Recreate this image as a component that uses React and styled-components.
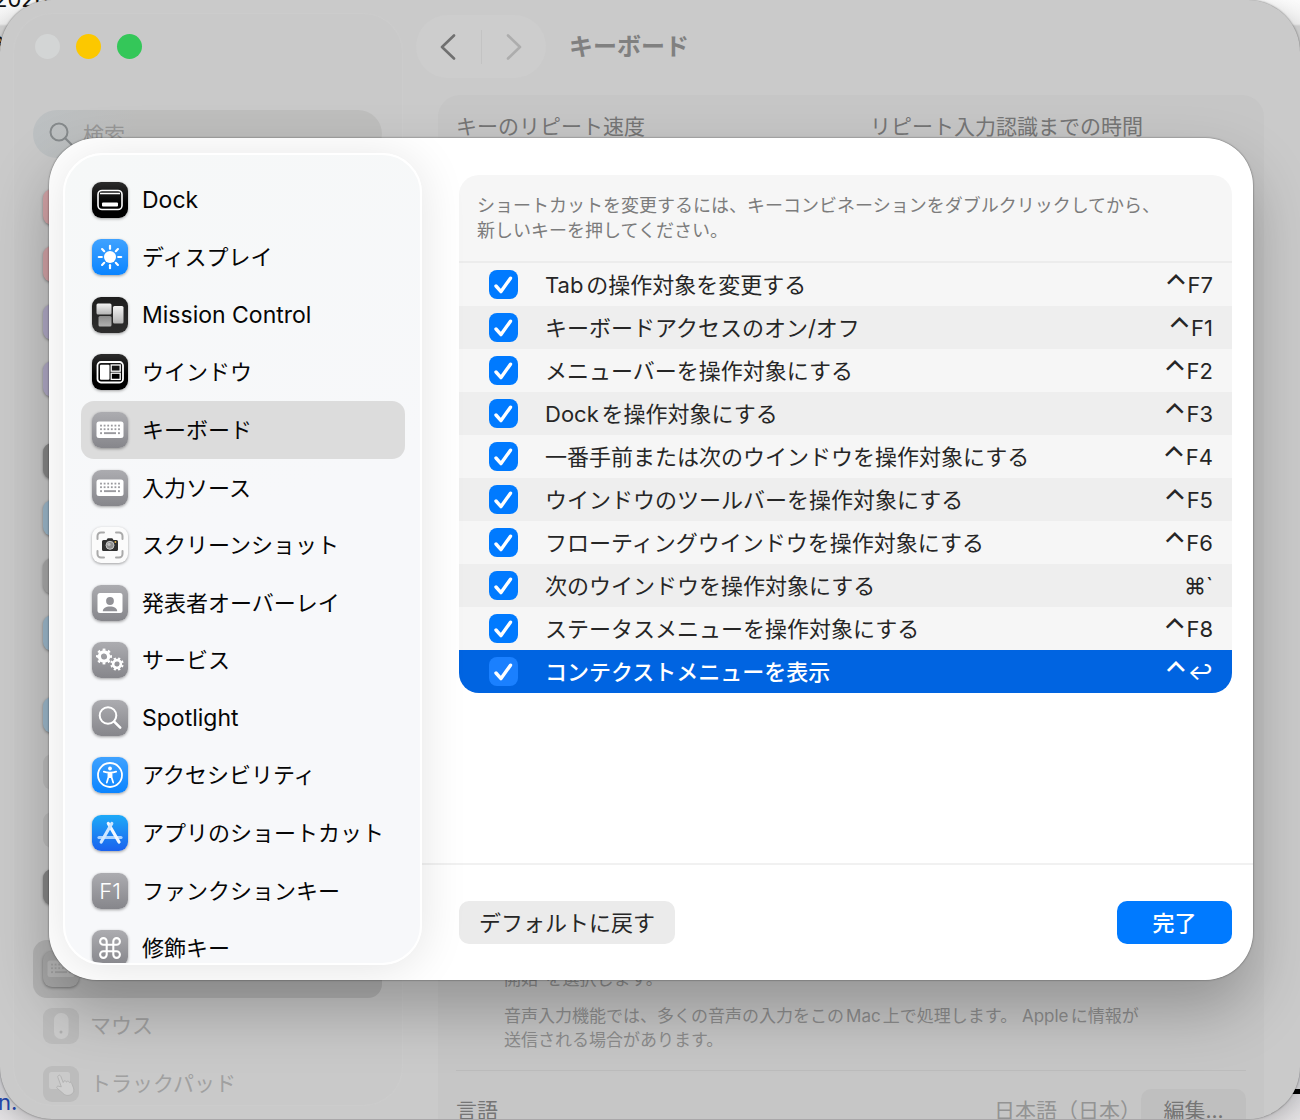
import React from "react";
import styled, { createGlobalStyle, css } from "styled-components";

const GlobalStyle = createGlobalStyle`
  *, *::before, *::after { box-sizing: border-box; }
  body {
    margin: 0;
    overflow: hidden;
    font-family: Inter, "Noto Sans CJK JP", sans-serif;
    text-autospace: normal;
    -webkit-font-smoothing: antialiased;
  }
  button, input { font: inherit; text-autospace: inherit; }
  ul { list-style: none; margin: 0; padding: 0; }
`;

/* ---------- desktop behind the window ---------- */

const Desktop = styled.div`
  position: relative;
  height: 100vh;
  overflow: hidden;
  background: linear-gradient(180deg, #fbfbfb 0, #f0f0f0 24px, #d4d4d4 26px, #d8d8dc 1080px, #e4e2e4 100%);
`;

const DesktopText = styled.span`
  position: absolute;
  left: ${(p) => p.$x}px;
  top: ${(p) => p.$y}px;
  font-size: 22px;
  line-height: 24px;
  color: ${(p) => p.$color};
`;

const DesktopRule = styled.div`
  position: absolute;
  right: 0;
  bottom: 26px;
  width: 40px;
  height: 5px;
  background: #000;
`;

/* ---------- settings window ---------- */

const Window = styled.div`
  position: absolute;
  inset: 0 0 1px 0;
  display: grid;
  grid-template-columns: 402px 1fr;
  border-radius: 52px;
  overflow: hidden;
  background: #cacaca;
  box-shadow: 0 0 2px rgba(0, 0, 0, 0.5), 0 8px 24px rgba(0, 0, 0, 0.2);
`;

const BackSidebar = styled.aside`
  display: flex;
  flex-direction: column;
  margin: 14px 0 14px 14px;
  border-radius: 38px;
  overflow: hidden;
  background: #c9c9c9;
  box-shadow: 0 0 2px #d0d0d0;
`;

const Lights = styled.div`
  display: flex;
  gap: 16px;
  padding: 20px 20px 0 21px;
`;

const Light = styled.button`
  width: 25px;
  height: 25px;
  padding: 0;
  border: 0;
  border-radius: 50%;
  background: ${(p) => p.$color};
`;

const Search = styled.label`
  display: flex;
  align-items: center;
  gap: 10px;
  flex: none;
  height: 48px;
  margin: 51px 20px 0 19px;
  padding: 0 16px;
  border-radius: 24px;
  background: linear-gradient(90deg, #bcc0c2, #bebebd 30%);
  svg { flex: none; }
`;

const SearchInput = styled.input`
  width: 100%;
  min-width: 0;
  padding: 0;
  border: 0;
  outline: 0;
  background: transparent;
  font-size: 21px;
  &::placeholder { color: #969696; opacity: 1; }
`;

const BackGroups = styled.div`
  display: flex;
  flex-direction: column;
  gap: 24px;
  margin: 20px 20px 0 19px;
`;

const BackGroup = styled.ul`
  flex: none;
  display: grid;
  grid-template-rows: repeat(4, 1fr);
  height: 230px;
`;

const BackRow = styled.li`
  display: flex;
  align-items: center;
  gap: 11px;
  padding: 0 10px;
  border-radius: 14px;
  font-size: 21px;
  line-height: 30px;
  color: #a0a0a0;
  background: ${(p) => (p.$active ? "#b4b4b4" : "transparent")};
`;

const Main = styled.main`
  display: flex;
  flex-direction: column;
  min-width: 0;
  height: 100%;
`;

const Toolbar = styled.header`
  display: flex;
  align-items: center;
  gap: 23px;
  padding: 15px 14px 17px;
`;

const NavPill = styled.nav`
  display: grid;
  grid-template-columns: 1fr 1px 1fr;
  align-items: center;
  width: 130px;
  height: 63px;
  border-radius: 32px;
  background: #cdcdcd;
`;

const NavButton = styled.button`
  display: grid;
  place-items: center;
  height: 100%;
  padding: 0;
  border: 0;
  background: none;
  color: ${(p) => (p.disabled ? "#adadad" : "#707070")};
`;

const NavDivider = styled.span`
  height: 34px;
  background: #c3c3c3;
`;

const WindowTitle = styled.h1`
  margin: 0;
  font-size: 24px;
  font-weight: 600;
  line-height: 32px;
  color: #808080;
`;

const BackCard = styled.section`
  flex: 1;
  min-height: 0;
  display: flex;
  flex-direction: column;
  justify-content: space-between;
  margin: 0 36px;
  border-radius: 22px 22px 0 0;
  background: #c6c6c6;
  overflow: hidden;
`;

const RateRow = styled.div`
  display: grid;
  grid-template-columns: 1fr 1fr;
  column-gap: 38px;
  padding: 17px 18px;
  font-size: 21px;
  line-height: 30px;
  color: #757575;
`;

const Dictation = styled.div`
  padding: 0 66px 18px;
  font-size: 17px;
  line-height: 24px;
  color: #8c8c8c;
  p { margin: 0; }
  p + p { margin-top: 13px; }
`;

const LanguageRow = styled.div`
  display: flex;
  align-items: flex-start;
  height: 49px;
  margin: 0 18px;
  padding-top: 18px;
  border-top: 1px solid #bcbcbc;
  font-size: 21px;
  line-height: 43px;
  color: #757575;
`;

const LanguageValue = styled.span`
  margin-left: auto;
  color: #939393;
`;

const EditButton = styled.button`
  height: 43px;
  min-width: 105px;
  padding: 0 20px;
  border: 0;
  border-radius: 10px;
  background: #bfbfbf;
  color: #757575;
`;

/* ---------- shortcuts sheet ---------- */

const Overlay = styled.div`
  position: absolute;
  inset: 0;
  display: grid;
  padding: 138px 47px 140px 49px;
`;

const Dialog = styled.div`
  display: grid;
  grid-template-columns: 373px 1fr;
  min-height: 0;
  border-radius: 48px;
  overflow: hidden;
  background: #fff;
`;

const DialogShadow = styled.div`
  display: grid;
  min-height: 0;
  border-radius: 48px;
  box-shadow: 0 0 2px rgba(0, 0, 0, 0.6), 0 30px 60px rgba(0, 0, 0, 0.25);
`;

const Sidebar = styled.nav`
  position: relative;
  z-index: 1;
  min-height: 0;
  margin: 15px 0 15px 14px;
  padding: 16px 15px 0 16px;
  border: 2px solid #fff;
  border-radius: 40px;
  overflow: hidden;
  background: linear-gradient(160deg, #f6f8f8, #f7f8fa 45%, #f7f8fa);
  box-shadow: 0 4px 48px rgba(0, 0, 0, 0.11);
`;

const SidebarList = styled.ul`
  display: grid;
  grid-template-rows: repeat(14, 1fr);
  height: 806px;
`;

const SidebarItem = styled.button`
  display: flex;
  align-items: center;
  gap: 14px;
  width: 100%;
  height: 100%;
  padding: 0 11px;
  border: 0;
  border-radius: 13px;
  background: ${(p) => (p.$active ? "#dcdcdc" : "transparent")};
  color: #060606;
  font-size: ${(p) => (p.$latin ? 23 : 22)}px;
  line-height: 30px;
  text-align: left;
  white-space: nowrap;
`;

const tones = {
  black: "linear-gradient(#2c2c2c, #000 60%)",
  graphite: "linear-gradient(#1e1e1e, #2e2e2e)",
  blue: "linear-gradient(#3fa2ff, #0a84ff)",
  store: "linear-gradient(#1eaaf8, #1a62ee)",
  gray: "linear-gradient(#acacb0, #86868b)",
  white: "#fbfbfb",
  pink: "#d3a3a6",
  lavender: "#b0a9c6",
  sky: "#9db9cc",
  ash: "#a9a9a9",
  dark: "#868686",
  faint: "#bcbcbc",
};

const Tile = styled.span`
  flex: none;
  display: grid;
  place-items: center;
  width: 36px;
  height: 36px;
  border-radius: 9px;
  overflow: hidden;
  background: ${(p) => tones[p.$tone]};
  ${(p) =>
    !p.$flat &&
    css`
      box-shadow: 0 1px 3px rgba(0, 0, 0, 0.36);
    `}
  color: #fff;
  font-size: 22px;
  font-weight: 300;
  line-height: 36px;
`;

const Pane = styled.div`
  display: flex;
  flex-direction: column;
  min-width: 0;
  min-height: 0;
`;

const PaneBody = styled.div`
  flex: 1;
  min-height: 0;
  padding: 37px 21px 0 37px;
`;

const Card = styled.section`
  border-radius: 20px;
  overflow: hidden;
  background: #f6f6f6;
`;

const Hint = styled.p`
  margin: 0;
  padding: 18px;
  border-bottom: 2px solid #ececec;
  font-size: 18px;
  line-height: 25px;
  color: #7c7c7c;
`;

const Table = styled.table`
  width: 100%;
  border-collapse: collapse;
  font-size: 22px;
  line-height: 30px;
`;

const Row = styled.tr`
  height: 43px;
  color: ${(p) => (p.$selected ? "#fff" : "#262626")};
  background: ${(p) => (p.$selected ? "#0064e1" : "transparent")};
  font-weight: ${(p) => (p.$selected ? 500 : 400)};
  &:nth-child(even) {
    background: ${(p) => (p.$selected ? "#0064e1" : "#eeeeee")};
  }
`;

const CheckCell = styled.td`
  width: 86px;
  padding: 0 0 0 30px;
`;

const NameCell = styled.td`
  padding: 0;
`;

const KeyCell = styled.td`
  padding: 0 19px 0 0;
  text-align: right;
  white-space: nowrap;
`;

const ControlKey = styled.span`
  font-size: 30px;
  line-height: 22px;
  vertical-align: -3px;
`;

const CheckWrap = styled.span`
  display: grid;
  width: 29px;
  height: 29px;
  > * { grid-area: 1 / 1; }
  svg { pointer-events: none; }
`;

const Check = styled.input`
  appearance: none;
  width: 29px;
  height: 29px;
  margin: 0;
  border-radius: 8px;
  background: ${(p) => (p.$selected ? "#1a80ff" : "#007aff")};
`;

const Footer = styled.footer`
  display: flex;
  justify-content: space-between;
  padding: 36px 21px 36px 37px;
  border-top: 2px solid #f1f1f1;
`;

const PushButton = styled.button`
  height: 43px;
  min-width: 115px;
  padding: 0 20px;
  border: 0;
  border-radius: 10px;
  font-size: 22px;
  line-height: 30px;
  font-weight: ${(p) => (p.$primary ? 500 : 400)};
  background: ${(p) => (p.$primary ? "#007aff" : "#ebebeb")};
  color: ${(p) => (p.$primary ? "#fff" : "#262626")};
`;

/* ---------- drawings ---------- */

const Svg = ({ children, size = 36 }) => (
  <svg width={size} height={size} viewBox={`0 0 ${size} ${size}`} fill="none" aria-hidden="true">
    {children}
  </svg>
);

const DockArt = () => (
  <Svg>
    <rect x="6" y="8.5" width="24" height="19" rx="4" stroke="#fff" strokeWidth="1.6" />
    <path d="M8 11.5h20" stroke="#fff" strokeWidth="1.4" />
    <rect x="10" y="20.5" width="16" height="4" rx="1" fill="#fff" />
  </Svg>
);

const DisplayArt = () => (
  <Svg>
    <circle cx="18" cy="18" r="6" fill="#fff" />
    {[0, 45, 90, 135, 180, 225, 270, 315].map((a) => (
      <path key={a} d="M18 6.8v3" stroke="#fff" strokeWidth="2.2" strokeLinecap="round" transform={`rotate(${a} 18 18)`} />
    ))}
  </Svg>
);

const MissionArt = () => (
  <Svg>
    <defs>
      <linearGradient id="pane" x2="0" y2="1">
        <stop stopColor="#f4f4f4" />
        <stop offset="1" stopColor="#b4b4b4" />
      </linearGradient>
      <linearGradient id="paneDim" x2="0" y2="1">
        <stop stopColor="#8b8b8b" />
        <stop offset="1" stopColor="#b2b2b2" />
      </linearGradient>
    </defs>
    <rect x="4.5" y="6.5" width="15" height="11" rx="1.5" fill="url(#pane)" />
    <rect x="21" y="9" width="10.5" height="17.5" rx="1.5" fill="url(#pane)" />
    <rect x="6.5" y="19" width="13" height="10.5" rx="1.5" fill="url(#paneDim)" />
  </Svg>
);

const WindowsArt = () => (
  <Svg>
    <rect x="5.5" y="8" width="25.5" height="20.5" rx="3.5" stroke="#fff" strokeWidth="1.8" />
    <rect x="8" y="10.7" width="9.5" height="15" rx="1" fill="#fff" />
    <rect x="19.2" y="11" width="9" height="6.2" fill="#151515" stroke="#fff" strokeWidth="1.3" />
    <rect x="19.2" y="19.2" width="9" height="6.2" fill="#000" stroke="#fff" strokeWidth="1.3" />
  </Svg>
);

const KeyboardArt = ({ ink = "#9a9a9e", paper = "#fff" }) => (
  <Svg>
    <rect x="4.5" y="9.5" width="27" height="16.5" rx="2.5" fill={paper} />
    {[13.6, 17.2].map((y) =>
      [9, 12.6, 16.2, 19.8, 23.4, 27].map((x) => (
        <rect key={`${x}-${y}`} x={x - 0.9} y={y - 0.9} width="1.8" height="1.8" fill={ink} />
      ))
    )}
    <rect x="8.1" y="20.2" width="1.9" height="1.9" fill={ink} />
    <rect x="12" y="20.2" width="12" height="1.9" fill={ink} />
    <rect x="26" y="20.2" width="1.9" height="1.9" fill={ink} />
  </Svg>
);

const ScreenshotArt = () => (
  <Svg>
    <path
      d="M5.5 12V9a3.5 3.5 0 0 1 3.5-3.5h3M24 5.5h3A3.5 3.5 0 0 1 30.5 9v3M30.5 24v3a3.5 3.5 0 0 1-3.5 3.5h-3M12 30.5H9A3.5 3.5 0 0 1 5.5 27v-3"
      stroke="#a9a9a9"
      strokeWidth="2"
      strokeLinecap="round"
    />
    <path d="M11.5 13h3l1.2-1.8h4.6l1.2 1.8h3a1.5 1.5 0 0 1 1.5 1.5v8a1.5 1.5 0 0 1-1.5 1.5h-13a1.5 1.5 0 0 1-1.5-1.5v-8a1.5 1.5 0 0 1 1.5-1.5z" fill="#2f2f2f" />
    <circle cx="18" cy="18.3" r="4" fill="#8f8f8f" stroke="#d0d0d0" strokeWidth="0.9" />
    <circle cx="17" cy="17.3" r="1.6" fill="#bdbdbd" />
    <circle cx="23.4" cy="15" r="0.9" fill="#e8b64a" />
  </Svg>
);

const PresenterArt = () => (
  <Svg>
    <rect x="5.5" y="8" width="25" height="20" rx="2.5" fill="#fff" />
    <circle cx="18" cy="16" r="3.9" fill="#919196" />
    <path d="M10.8 26.200c0-3 3-4.700 7.200-4.700s7.200 1.700 7.200 4.700z" fill="#919196" />
  </Svg>
);

const Gear = ({ cx, cy, r, turn }) => (
  <g transform={`rotate(${turn} ${cx} ${cy})`}>
    <circle cx={cx} cy={cy} r={r * 0.58} stroke="#fff" strokeWidth={r * 0.4} />
    <circle cx={cx} cy={cy} r={r * 0.86} stroke="#fff" strokeWidth={r * 0.28} pathLength="16" strokeDasharray="1 1" />
  </g>
);

const ServicesArt = () => (
  <Svg>
    <Gear cx={12} cy={14.5} r={8} turn={-11} />
    <Gear cx={25} cy={22} r={6.7} turn={11} />
  </Svg>
);

const SpotlightArt = () => (
  <Svg>
    <circle cx="16" cy="15.5" r="8.3" stroke="#fff" strokeWidth="2" />
    <path d="M22.200 21.700l6 6" stroke="#fff" strokeWidth="2.600" strokeLinecap="round" />
  </Svg>
);

const AccessibilityArt = () => (
  <Svg>
    <circle cx="18" cy="18" r="12" stroke="#fff" strokeWidth="1.8" />
    <circle cx="18" cy="11.5" r="1.9" fill="#fff" />
    <path
      d="M11.800 14.600c2.200.8 4 1 6.200 1s4-.2 6.200-1M16.400 15.500v4.800l-1.600 5.300M19.600 15.500v4.800l1.600 5.300"
      stroke="#fff"
      strokeWidth="1.7"
      strokeLinecap="round"
    />
    <path d="M16 15h4v6h-4z" fill="#fff" />
  </Svg>
);

const StoreArt = () => (
  <Svg>
    <g strokeLinecap="round" strokeWidth="3.2">
      <path d="M7 22.500h22" stroke="#a9d2ff" />
      <path d="M16.300 8.500L27 27" stroke="#f2f8ff" />
      <path d="M19.800 8.500L9.200 27" stroke="#cfe7ff" />
    </g>
  </Svg>
);

const CommandArt = () => (
  <Svg>
    <path
      transform="translate(4.8 4.8) scale(1.1)"
      d="M15 6v12a3 3 0 1 0 3-3H6a3 3 0 1 0 3 3V6a3 3 0 1 0-3 3h12a3 3 0 1 0-3-3"
      stroke="#fff"
      strokeWidth="1.9"
    />
  </Svg>
);

const MouseArt = () => (
  <Svg>
    <rect x="11" y="5" width="14.5" height="26" rx="7" fill="#cbcbcb" />
    <circle cx="18" cy="24" r="1.5" fill="#b0b0b0" />
  </Svg>
);

const TrackpadArt = () => (
  <Svg>
    <rect x="6" y="6" width="21" height="17" rx="2.5" fill="#cacaca" />
    <path
      d="M15.500 9.500c1-.6 2 0 2.400 1l2.300 6 .9-1.600c1-.6 2 .1 2.200 1.200l1-.8c1-.4 1.900.3 2.100 1.300.9-.6 2-.2 2.400.9l1.700 4.500c1 3.300-.6 6-3.400 7-3 1.100-5.200.2-7-1.600l-6-5.200c-.8-1-.1-2 1-2l3.200.6-3.400-9.500c-.3-.9 0-1.500.6-1.800z"
      fill="#cfcfcf"
      stroke="#b0b0b0"
      strokeWidth="0.9"
    />
  </Svg>
);

const SearchArt = () => (
  <svg width="24" height="24" viewBox="0 0 24 24" fill="none" aria-hidden="true">
    <circle cx="10" cy="10" r="8.5" stroke="#868a8c" strokeWidth="2" />
    <path d="M16.200 16.200l6 6" stroke="#868a8c" strokeWidth="2.200" strokeLinecap="round" />
  </svg>
);

const Chevron = ({ flip }) => (
  <svg width="16" height="26" viewBox="0 0 16 26" fill="none" aria-hidden="true">
    <path
      d={flip ? "M2 1.500l12 11.500L2 24.500" : "M14 1.500L2 13l12 11.500"}
      stroke="currentColor"
      strokeWidth="2.6"
      strokeLinecap="round"
      strokeLinejoin="round"
    />
  </svg>
);

const CheckMark = () => (
  <svg width="29" height="29" viewBox="0 0 29 29" fill="none" aria-hidden="true">
    <path d="M7 16l5 5.600L21.500 8.200" stroke="#fff" strokeWidth="3.4" strokeLinecap="round" strokeLinejoin="round" />
  </svg>
);

/* ---------- data ---------- */

const categories = [
  { label: "Dock", tone: "black", art: <DockArt />, latin: true },
  { label: "ディスプレイ", tone: "blue", art: <DisplayArt /> },
  { label: "Mission Control", tone: "graphite", art: <MissionArt />, latin: true },
  { label: "ウインドウ", tone: "black", art: <WindowsArt /> },
  { label: "キーボード", tone: "gray", art: <KeyboardArt />, active: true },
  { label: "入力ソース", tone: "gray", art: <KeyboardArt /> },
  { label: "スクリーンショット", tone: "white", art: <ScreenshotArt /> },
  { label: "発表者オーバーレイ", tone: "gray", art: <PresenterArt /> },
  { label: "サービス", tone: "gray", art: <ServicesArt /> },
  { label: "Spotlight", tone: "gray", art: <SpotlightArt />, latin: true },
  { label: "アクセシビリティ", tone: "blue", art: <AccessibilityArt /> },
  { label: "アプリのショートカット", tone: "store", art: <StoreArt /> },
  { label: "ファンクションキー", tone: "gray", art: "F1" },
  { label: "修飾キー", tone: "gray", art: <CommandArt /> },
];

const shortcuts = [
  { name: "Tabの操作対象を変更する", control: true, keys: "F7" },
  { name: "キーボードアクセスのオン/オフ", control: true, keys: "F1" },
  { name: "メニューバーを操作対象にする", control: true, keys: "F2" },
  { name: "Dockを操作対象にする", control: true, keys: "F3" },
  { name: "一番手前または次のウインドウを操作対象にする", control: true, keys: "F4" },
  { name: "ウインドウのツールバーを操作対象にする", control: true, keys: "F5" },
  { name: "フローティングウインドウを操作対象にする", control: true, keys: "F6" },
  { name: "次のウインドウを操作対象にする", keys: "⌘`" },
  { name: "ステータスメニューを操作対象にする", control: true, keys: "F8" },
  { name: "コンテクストメニューを表示", control: true, keys: "↩", selected: true },
];

const backGroups = [
  [{ tone: "pink" }, { tone: "pink" }, { tone: "lavender" }, { tone: "lavender" }],
  [{ tone: "dark" }, { tone: "sky" }, { tone: "ash" }, { tone: "sky" }],
  [{ tone: "sky" }, { tone: "faint" }, { tone: "faint" }, { tone: "dark" }],
  [
    { tone: "ash", art: <KeyboardArt ink="#a4a4a4" paper="#bababa" />, active: true },
    { tone: "faint", art: <MouseArt />, label: "マウス" },
    { tone: "faint", art: <TrackpadArt />, label: "トラックパッド" },
  ],
];

/* ---------- page ---------- */

export default function App() {
  return (
    <Desktop>
      <GlobalStyle />
      <DesktopText $x={-6} $y={-13} $color="#111">2026</DesktopText>
      <DesktopText $x={-9} $y={32} $color="#111">8</DesktopText>
      <DesktopText $x={-2} $y={1090} $color="#2348b0">n.</DesktopText>
      <DesktopRule />

      <Window>
        <BackSidebar>
          <Lights>
            <Light $color="#d3d5d5" aria-label="閉じる" />
            <Light $color="#fcc800" aria-label="しまう" />
            <Light $color="#34c759" aria-label="拡大" />
          </Lights>
          <Search>
            <SearchArt />
            <SearchInput type="search" placeholder="検索" aria-label="検索" />
          </Search>
          <BackGroups>
            {backGroups.map((group, g) => (
              <BackGroup key={g}>
                {group.map((item, i) => (
                  <BackRow key={i} $active={item.active}>
                    <Tile $tone={item.tone} $flat={item.tone === "faint"}>{item.art}</Tile>
                    {item.label}
                  </BackRow>
                ))}
              </BackGroup>
            ))}
          </BackGroups>
        </BackSidebar>

        <Main>
          <Toolbar>
            <NavPill>
              <NavButton aria-label="戻る"><Chevron /></NavButton>
              <NavDivider />
              <NavButton aria-label="進む" disabled><Chevron flip /></NavButton>
            </NavPill>
            <WindowTitle>キーボード</WindowTitle>
          </Toolbar>
          <BackCard>
            <RateRow>
              <span>キーのリピート速度</span>
              <span>リピート入力認識までの時間</span>
            </RateRow>
            <div>
              <Dictation>
                <p>開始”を選択します。</p>
                <p>
                  音声入力機能では、多くの音声の入力をこのMac上で処理します。 Appleに情報が
                  <br />
                  送信される場合があります。
                </p>
              </Dictation>
              <LanguageRow>
                <span>言語</span>
                <LanguageValue>日本語（日本）</LanguageValue>
                <EditButton>編集...</EditButton>
              </LanguageRow>
            </div>
          </BackCard>
        </Main>
      </Window>

      <Overlay>
        <DialogShadow>
          <Dialog role="dialog" aria-modal="true" aria-label="キーボードショートカット">
            <Sidebar>
              <SidebarList>
                {categories.map((c) => (
                  <li key={c.label}>
                    <SidebarItem $active={c.active} $latin={c.latin}>
                      <Tile $tone={c.tone}>{c.art}</Tile>
                      {c.label}
                    </SidebarItem>
                  </li>
                ))}
              </SidebarList>
            </Sidebar>
            <Pane>
              <PaneBody>
                <Card>
                  <Hint>
                    ショートカットを変更するには、キーコンビネーションをダブルクリックしてから、
                    <br />
                    新しいキーを押してください。
                  </Hint>
                  <Table>
                    <tbody>
                      {shortcuts.map(({ name, control, keys, selected }, i) => (
                        <Row key={name} $selected={selected}>
                          <CheckCell>
                            <CheckWrap>
                              <Check id={`shortcut-${i}`} type="checkbox" defaultChecked $selected={selected} />
                              <CheckMark />
                            </CheckWrap>
                          </CheckCell>
                          <NameCell>
                            <label htmlFor={`shortcut-${i}`}>{name}</label>
                          </NameCell>
                          <KeyCell>
                            {control && <ControlKey>⌃</ControlKey>}
                            {keys}
                          </KeyCell>
                        </Row>
                      ))}
                    </tbody>
                  </Table>
                </Card>
              </PaneBody>
              <Footer>
                <PushButton>デフォルトに戻す</PushButton>
                <PushButton $primary>完了</PushButton>
              </Footer>
            </Pane>
          </Dialog>
        </DialogShadow>
      </Overlay>
    </Desktop>
  );
}
